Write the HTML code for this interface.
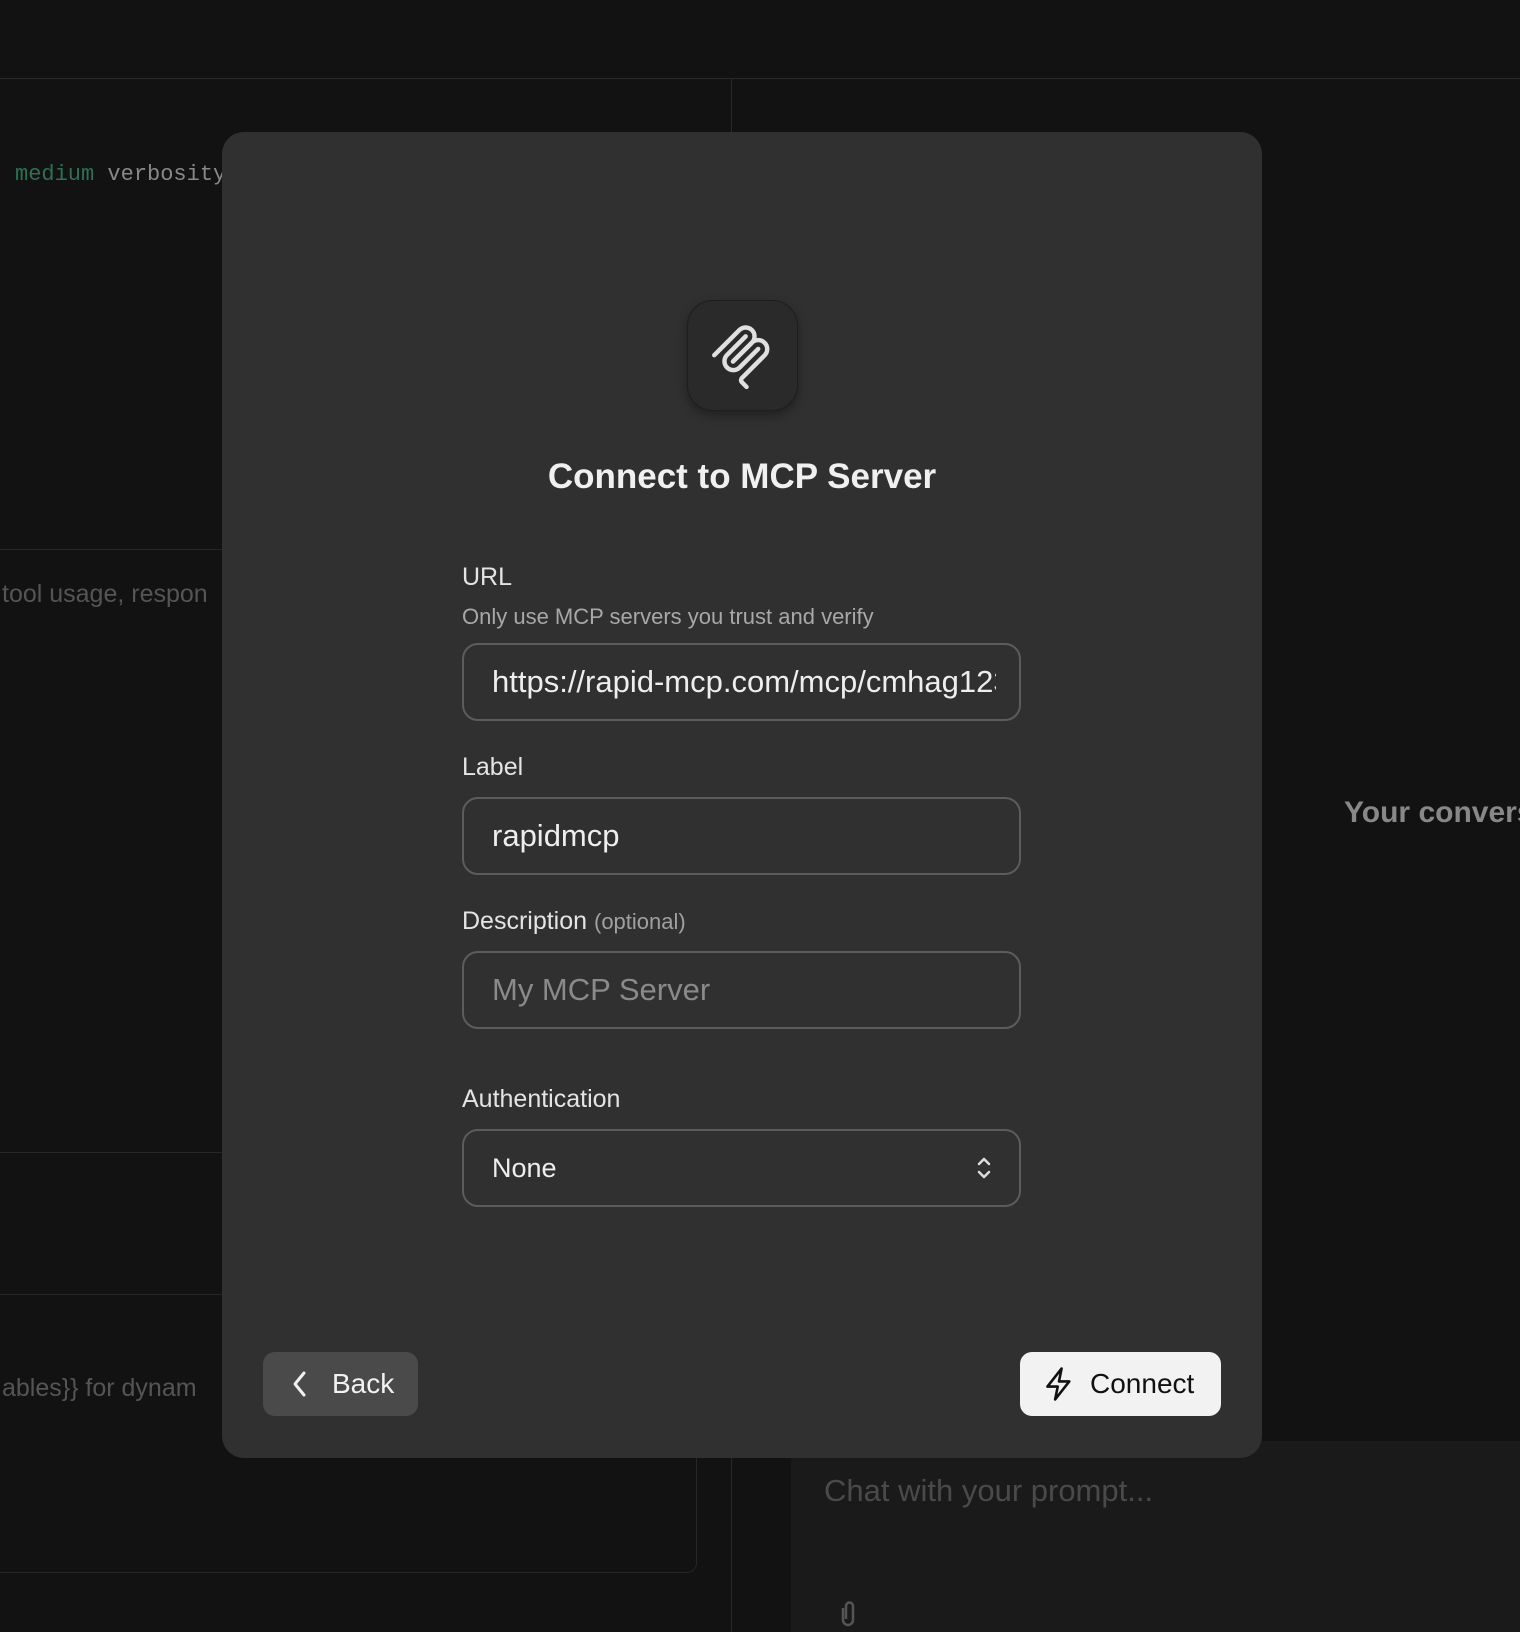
<!DOCTYPE html>
<html><head><meta charset="utf-8"><style>
*{box-sizing:border-box;margin:0;padding:0}
html,body{width:1520px;height:1632px;overflow:hidden}
body{background:#121212;position:relative;font-family:"Liberation Sans",sans-serif;color:#eee}
.a{position:absolute}
.mono{font-family:"Liberation Mono",monospace}
.modal{left:222px;top:132px;width:1040px;height:1326px;background:#303030;border-radius:22px}
.lbl{position:absolute;left:462px;font-size:25px;color:#e4e4e4}
.inp{position:absolute;left:462px;width:559px;height:78px;border:2px solid #5c5c5c;border-radius:16px;padding-left:28px;font-size:31px;line-height:74px;color:#eee;overflow:hidden;white-space:nowrap}
.clip{position:absolute;left:0;top:0;width:1520px;height:1632px;overflow:hidden}
</style></head><body>
<div class="clip">
<div class="a" style="left:0;top:78px;width:1520px;height:1px;background:#2a2a2a"></div>
<div class="a" style="left:731px;top:79px;width:1px;height:1553px;background:#2a2a2a"></div>
<div class="a mono" style="left:15px;top:162px;font-size:22px;color:#888"><span style="color:#2f6f55">medium</span> verbosity</div>
<div class="a" style="left:0;top:549px;width:731px;height:1px;background:#262626"></div>
<div class="a" style="left:2px;top:580px;font-size:25px;color:#555">tool usage, respon</div>
<div class="a" style="left:0;top:1152px;width:731px;height:1px;background:#262626"></div>
<div class="a" style="left:0;top:1294px;width:697px;height:279px;border:1px solid #262626;border-left:none;border-radius:0 0 10px 0"></div>
<div class="a" style="left:2px;top:1374px;font-size:25px;color:#555">ables}} for dynam</div>
<div class="a" style="left:1344px;top:796px;width:176px;overflow:hidden;font-size:30px;color:#888;font-weight:bold;white-space:nowrap">Your conversation</div>
<div class="a" style="left:791px;top:1441px;width:729px;height:191px;background:#1a1a1a;border-radius:22px 0 0 0"></div>
<div class="a" style="left:824px;top:1473px;font-size:31px;color:#4a4a4a;white-space:nowrap">Chat with your prompt...</div>
<svg class="a" style="left:835px;top:1598px" width="26" height="32" viewBox="0 0 26 32" fill="none" stroke="#555" stroke-width="2.5"><path d="M8 10v12a5 5 0 0 0 10 0V8a3.5 3.5 0 0 0-7 0v13"/></svg>

<div class="a modal"></div>
<div class="a" style="left:687px;top:300px;width:111px;height:111px;background:#2a2a2a;border:1px solid #1e1e1e;border-radius:26px;box-shadow:0 4px 10px rgba(0,0,0,.35)"></div>
<svg class="a" style="left:0;top:0" width="1520" height="500" fill="none" stroke="#e0e0e0" stroke-linecap="round">
<g transform="translate(705,319) scale(0.37)" stroke-width="12">
<path d="M25 97.8528L92.8822 29.9706C102.255 20.598 117.451 20.598 126.823 29.9706C136.196 39.3431 136.196 54.5391 126.823 63.9117L75.5581 115.177"/>
<path d="M76.2652 114.47L126.823 63.9117C136.196 54.5391 151.392 54.5391 160.765 63.9117L161.118 64.2652C170.491 73.6378 170.491 88.8338 161.118 98.2063L99.7248 159.6C96.6006 162.724 96.6006 167.789 99.7248 170.913L112.331 183.52"/>
<path d="M109.853 46.9411L59.6482 97.1457C50.2756 106.518 50.2756 121.714 59.6482 131.087C69.0208 140.459 84.2167 140.459 93.5893 131.087L143.794 80.8822"/>
</g></svg>
<div class="a" style="left:222px;width:1040px;top:457px;text-align:center;font-size:35px;font-weight:bold;color:#f0f0f0">Connect to MCP Server</div>
<div class="lbl" style="top:563px">URL</div>
<div class="lbl" style="top:604px;font-size:22px;color:#a8a8a8">Only use MCP servers you trust and verify</div>
<div class="inp" style="top:643px"><div style="width:504px;overflow:hidden">https://rapid-mcp.com/mcp/cmhag123</div></div>
<div class="lbl" style="top:753px">Label</div>
<div class="inp" style="top:797px">rapidmcp</div>
<div class="lbl" style="top:907px">Description <span style="font-size:22px;color:#a0a0a0">(optional)</span></div>
<div class="inp" style="top:951px;color:#8a8a8a">My MCP Server</div>
<div class="lbl" style="top:1085px">Authentication</div>
<div class="inp" style="top:1129px;font-size:27px">None</div>
<svg class="a" style="left:974px;top:1155px" width="20" height="26" viewBox="0 0 20 26" fill="none" stroke="#ddd" stroke-width="2.5" stroke-linecap="round" stroke-linejoin="round"><path d="M5 9l5-5 5 5M5 17l5 5 5-5"/></svg>

<div class="a" style="left:263px;top:1352px;width:155px;height:64px;background:#4a4a4a;border-radius:12px"></div>
<svg class="a" style="left:290px;top:1370px" width="20" height="28" viewBox="0 0 20 28" fill="none" stroke="#f0f0f0" stroke-width="3" stroke-linecap="round" stroke-linejoin="round"><path d="M14 3L5 14l9 11"/></svg>
<div class="a" style="left:332px;top:1368px;font-size:28px;color:#f2f2f2">Back</div>
<div class="a" style="left:1020px;top:1352px;width:201px;height:64px;background:#f2f2f2;border-radius:12px"></div>
<svg class="a" style="left:1043px;top:1366px" width="32" height="36" viewBox="0 0 24 28" fill="none" stroke="#111" stroke-width="2" stroke-linejoin="round"><path d="M14 2L3 16h8l-2 10 11-14h-8z"/></svg>
<div class="a" style="left:1090px;top:1368px;font-size:28px;color:#111">Connect</div>
</div>
</body></html>
